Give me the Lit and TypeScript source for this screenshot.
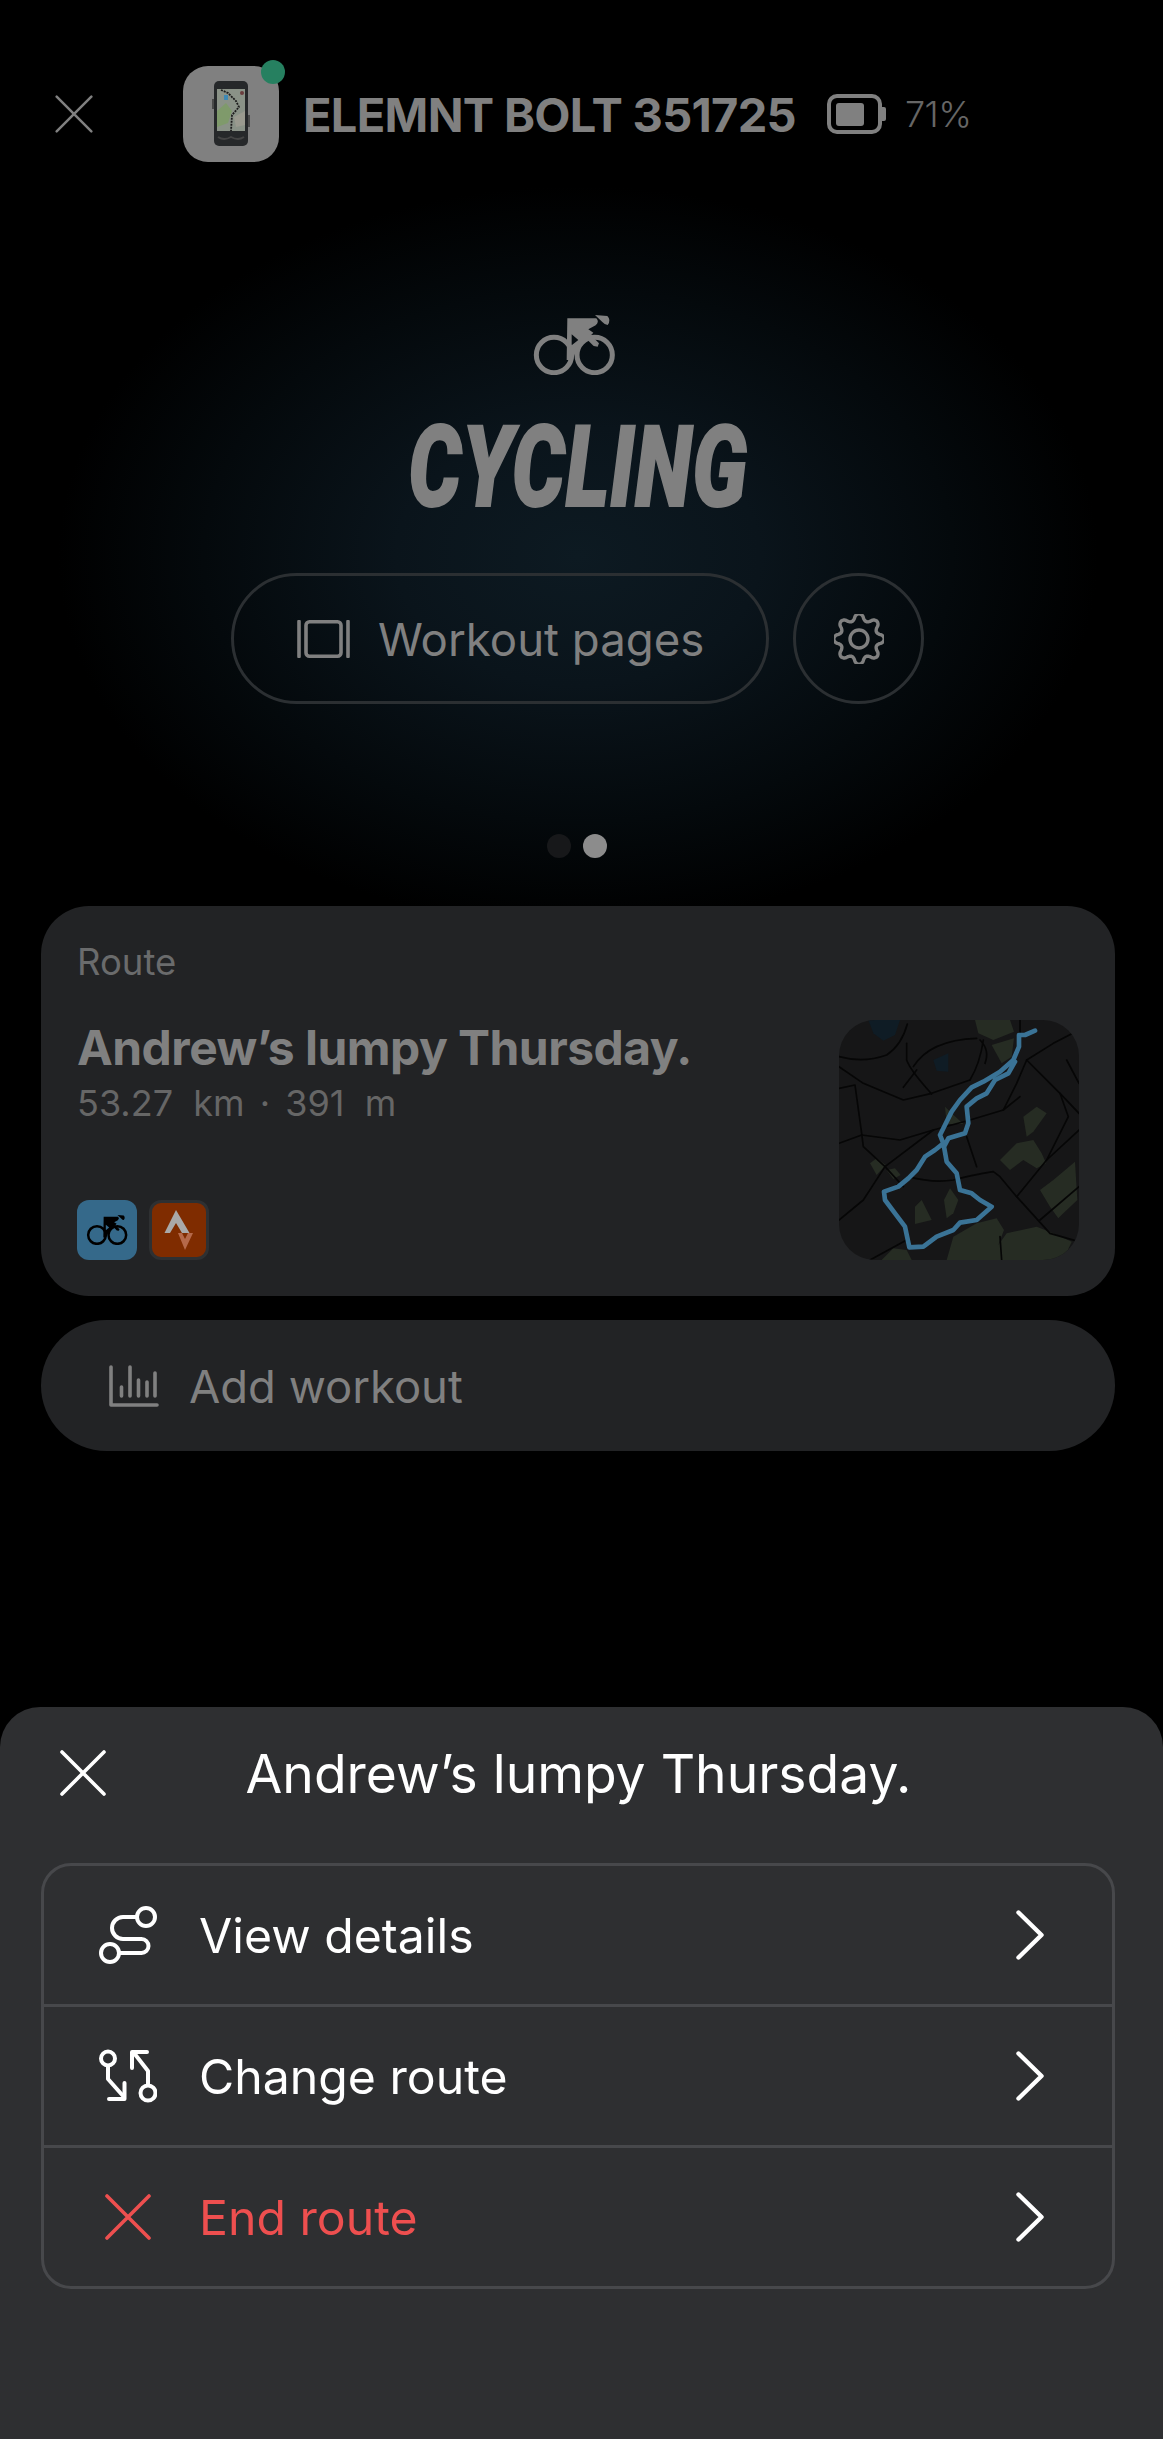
import { LitElement, html, css, svg } from "lit";
import { customElement } from "lit/decorators.js";

function gearPath(): string {
  const pts: string[] = [];
  const n = 192;
  for (let i = 0; i < n; i++) {
    const t = (i / n) * Math.PI * 2;
    const w = Math.cos(8 * t);
    const r = 22 + 3.2 * Math.sign(w) * Math.pow(Math.abs(w), 0.7);
    const x = 25 + r * Math.sin(t);
    const y = 25 - r * Math.cos(t);
    pts.push(`${i ? "L" : "M"}${x.toFixed(2)} ${y.toFixed(2)}`);
  }
  return pts.join(" ") + "Z";
}

const bike = (w: number, h: number, color: string) => html`
  <svg class="glyph" width=${w} height=${h} viewBox="100 75 250 180">
    <circle cx="165" cy="195" r="53" fill="none" stroke=${color} stroke-width="15"></circle>
    <circle cx="287" cy="195" r="53" fill="none" stroke=${color} stroke-width="15"></circle>
    <path fill=${color} fill-rule="evenodd" d="M205 85 L292 85 Q302 95 290 106 L268 118 L283 128 L262 150 L236 175 L219 210 L203 210 Z M218 133 L218 166 L238 150 Z"></path>
    <path fill=${color} d="M288 75 L325 78 Q337 90 326 105 Q318 105 310 96 Z"></path>
    <path fill=${color} d="M262 146 L276 136 L300 160 L296 170 L284 168 Z"></path>
  </svg>`;

const x = (size: number, color: string, sw: number) => html`
  <svg class="glyph" width=${size} height=${size} viewBox="0 0 46 46">
    <path d="M2 2 L44 44 M44 2 L2 44" fill="none" stroke=${color} stroke-width=${sw} stroke-linecap="round"></path>
  </svg>`;

const chevron = html`
  <svg class="glyph" width="28" height="50" viewBox="0 0 28 50">
    <path d="M2.5 2.5 L25.5 25 L2.5 47.5" fill="none" stroke="#fff" stroke-width="4.4" stroke-linecap="round" stroke-linejoin="round"></path>
  </svg>`;

const mapArt = svg`
  <rect x="57" y="60" width="720" height="720" fill="#161617"></rect>
  <g fill="#0f1c25">
    <path d="M145 60 L240 60 L225 105 L190 122 L160 100Z"></path>
    <path d="M340 180 L385 160 L385 215 L350 212Z"></path>
  </g>
  <g fill="#262c23">
    <path d="M465 60 L570 60 L582 95 L520 120 L475 100Z"></path>
    <path d="M515 135 L582 115 L575 170 L545 190Z"></path>
    <path d="M610 350 L650 320 L680 340 L640 395 L620 410Z"></path>
    <path d="M540 480 L590 430 L640 420 L665 460 L678 490 L650 505 L610 480 L570 510Z"></path>
    <path d="M660 570 L700 540 L765 485 L772 600 L730 640 L715 655 L690 620Z"></path>
    <path d="M380 780 L400 710 L470 670 L530 655 L552 690 L535 735 L560 700 L650 680 L700 700 L755 725 L730 780Z"></path>
    <path d="M185 780 L220 745 L260 750 L275 780Z"></path>
    <path d="M150 490 L170 475 L197 495 L170 525Z"></path>
    <path d="M200 510 L225 505 L242 525 L220 537Z"></path>
    <path d="M285 620 L305 600 L335 660 L285 672Z"></path>
    <path d="M372 600 L390 565 L415 600 L400 640 L380 655Z"></path>
    <path d="M375 320 L395 340 L430 372 L380 372Z"></path>
  </g>
  <g fill="none" stroke="#060606" stroke-width="5" stroke-linejoin="round" stroke-linecap="round">
    <path d="M57 170 Q130 190 200 165 Q245 135 262 72"></path>
    <path d="M260 130 V180 Q270 210 335 282"></path>
    <path d="M57 200 L130 250 L250 300 L335 280 L450 240"></path>
    <path d="M290 210 L250 262"></path>
    <path d="M57 265 L105 255 L125 400 L130 440 L195 500 L250 560"></path>
    <path d="M57 430 L125 405 L240 420 L340 390 L450 360 L550 330 L590 250 L620 180 L700 130 L777 90"></path>
    <path d="M57 660 L130 600 L195 500 L340 390"></path>
    <path d="M265 530 Q340 550 400 540 Q480 520 520 515 L540 530 L590 590 L690 700 L777 725"></path>
    <path d="M620 180 L720 280 L777 340"></path>
    <path d="M440 410 L470 500"></path>
    <path d="M590 590 L680 480 L777 390"></path>
    <path d="M550 330 L600 290"></path>
    <path d="M720 280 L745 350 L680 480"></path>
    <path d="M540 710 L545 780"></path>
    <path d="M660 660 L777 560"></path>
    <path d="M150 780 L260 720"></path>
    <path d="M480 120 Q510 150 495 190"></path>
    <path d="M280 200 Q330 120 470 115"></path>
    <path d="M450 240 Q480 190 490 120"></path>
    <path d="M600 60 V100"></path>
    <path d="M740 180 L777 250"></path>
  </g>
  <path fill="none" stroke="#3a7396" stroke-width="14" stroke-linejoin="round" stroke-linecap="round"
    d="M645 92 L615 105 L597 105 L597 140 L580 180 L540 215 L490 245 L455 262 L420 300 L395 335 L375 375 L360 405 L370 430 L345 450 L315 470 L290 510 L265 535 L235 560 L192 575 L195 600 L225 640 L255 680 L268 742 L310 740 L350 710 L400 690 L420 668 L470 660 L515 620 L480 600 L455 580 L420 570 L410 520 L380 485 L372 440 L385 415 L435 400 L445 370 L440 320 L470 295 L500 280 L525 240 L565 220 L585 185"></path>
`;

@customElement("app-root")
export class AppRoot extends LitElement {
  static styles = css`
    :host {
      display: block;
      width: 1163px;
      height: 2439px;
      background: #000;
      font-family: Inter, "Liberation Sans", sans-serif;
      overflow: hidden;
    }
    .glyph { display: block; }
    .page {
      display: flex;
      flex-direction: column;
      height: 2439px;
    }
    .header {
      display: flex;
      align-items: center;
      height: 96px;
      padding: 66px 0 0 55px;
    }
    .header-x { display: block; margin-right: 90px; }
    .device {
      position: relative;
      width: 96px;
      height: 96px;
      border-radius: 25px;
      background: #808080;
      margin-right: 24px;
      display: flex;
      align-items: center;
      justify-content: center;
    }
    .dot {
      position: absolute;
      top: -6px;
      right: -6px;
      width: 24px;
      height: 24px;
      border-radius: 50%;
      background: #268060;
    }
    .device-name {
      font-size: 47px;
      font-weight: 700;
      color: #808080;
      letter-spacing: -0.7px;
      white-space: nowrap;
      margin-right: 31px;
    }
    .battery { display: block; margin-right: 19px; }
    .pct {
      font-size: 36px;
      font-weight: 300;
      color: #666;
      letter-spacing: -0.5px;
    }
    .hero {
      display: flex;
      flex-direction: column;
      align-items: center;
      height: 744px;
      background: radial-gradient(ellipse 520px 370px at 578px 394px, #0d1a22 0%, #0a141b 35%, #04090c 72%, #000 100%);
    }
    .hero-bike { margin-top: 153px; margin-left: -16px; }
    .sport {
      height: 86px;
      margin-top: 50px;
      margin-left: -6px;
      line-height: 86px;
      font-family: Roboto, sans-serif;
      font-style: italic;
      font-weight: 900;
      font-size: 112px;
      color: #808080;
      -webkit-text-stroke: 2px #808080;
      transform: scaleX(0.74);
      white-space: nowrap;
      letter-spacing: 1px;
    }
    .actions {
      display: flex;
      gap: 24px;
      margin-top: 62px;
      margin-left: -8px;
    }
    .btn {
      box-sizing: border-box;
      height: 131px;
      border: 3px solid #2b2f32;
      border-radius: 66px;
      display: flex;
      align-items: center;
    }
    .btn.wide {
      width: 538px;
      gap: 27px;
      padding-left: 63px;
      font-size: 45.6px;
      color: #808080;
      font-weight: 400;
    }
    .btn.wide span { padding: 2px 0 0 1px; }
    .btn.round { width: 131px; justify-content: center; }
    .dots {
      display: flex;
      gap: 12px;
      margin-top: 130px;
      margin-left: -10px;
    }
    .dots span {
      width: 24px;
      height: 24px;
      border-radius: 50%;
      background: #17181a;
    }
    .dots span.on { background: #8c8c8c; }
    .stack {
      display: flex;
      flex-direction: column;
      gap: 24px;
      padding: 0 48px 0 41px;
    }
    .card {
      box-sizing: border-box;
      height: 390px;
      border-radius: 48px;
      background: #222325;
      display: flex;
      justify-content: space-between;
      padding: 0 36px 0 36px;
    }
    .info {
      display: flex;
      flex-direction: column;
    }
    .label {
      font-size: 36.5px;
      line-height: 42px;
      margin-top: 35px;
      color: #6a6b6c;
    }
    .route-name {
      font-size: 48px;
      font-weight: 700;
      line-height: 56px;
      margin-top: 37px;
      color: #808080;
      letter-spacing: -0.55px;
    }
    .meta {
      font-size: 36px;
      line-height: 42px;
      margin-top: 6px;
      color: #666;
      white-space: pre;
    }
    .sep { margin: 0 5px; }
    .badges {
      display: flex;
      gap: 12px;
      margin-top: auto;
      margin-bottom: 36px;
    }
    .badge {
      box-sizing: border-box;
      width: 60px;
      height: 60px;
      border-radius: 12px;
      display: flex;
      align-items: center;
      justify-content: center;
    }
    .badge.blue { background: #35698a; }
    .badge.strava { background: #7f2c00; border: 3px solid #2e3032; }
    .map {
      display: block;
      width: 240px;
      height: 240px;
      margin-top: 114px;
      border-radius: 36px;
      overflow: hidden;
    }
    .add {
      box-sizing: border-box;
      height: 131px;
      border-radius: 66px;
      background: #222325;
      display: flex;
      align-items: center;
      gap: 30px;
      padding-left: 68px;
      font-size: 45.4px;
      color: #808080;
    }
    .add span { padding-top: 2px; }
    .sheet {
      box-sizing: border-box;
      height: 732px;
      margin-top: auto;
      background: #2e2f31;
      border-radius: 40px 40px 0 0;
    }
    .sheet-head {
      display: grid;
      grid-template-columns: 1fr auto 1fr;
      align-items: center;
      height: 132px;
      margin-bottom: 24px;
      padding-left: 60px;
      padding-right: 66px;
      color: #fff;
      font-size: 53.4px;
    }
    .list {
      box-sizing: border-box;
      margin: 0 48px 0 41px;
      border: 3px solid #47484b;
      border-radius: 30px;
    }
    .row {
      display: flex;
      align-items: center;
      height: 138px;
      padding: 0 68px 0 55px;
      font-size: 48.2px;
      color: #fff;
    }
    .row + .row { border-top: 3px solid #47484b; }
    .row.danger { color: #ee4f4f; }
    .row-icon {
      width: 58px;
      margin-right: 42px;
      display: flex;
      align-items: center;
      justify-content: center;
    }
    .row-label { flex: 1; }
  `;

  render() {
    const gray = "#808080";
    return html`
      <div class="page">
        <div class="header">
          <div class="header-x">${x(38, gray, 3)}</div>
          <div class="device">
            <svg class="glyph" width="38" height="66" viewBox="0 0 38 66">
              <rect x="2" y="0" width="34" height="65" rx="5" fill="#26282a"></rect>
              <rect x="0" y="18" width="2" height="10" fill="#4a4a4a"></rect>
              <rect x="36" y="34" width="2" height="12" fill="#4a4a4a"></rect>
              <rect x="5" y="8" width="28" height="42" fill="#8a9287"></rect>
              <path d="M5 30 L14 22 L20 30 L16 42 L5 46Z" fill="#7f9a6b"></path>
              <path d="M22 36 L33 30 V44 L24 46Z" fill="#9a9a8f"></path>
              <rect x="12" y="14" width="4" height="5" fill="#3d89b5"></rect>
              <path d="M9 9 L16 12 L24 20 L27 26 L20 34 L19 50" fill="none" stroke="#1c1c1c" stroke-width="1.8" stroke-dasharray="2 1"></path>
              <circle cx="30" cy="12" r="2" fill="#6a3d3d"></circle>
              <path d="M6 56 Q12 60 19 56 Q26 60 32 56" fill="none" stroke="#444" stroke-width="2"></path>
            </svg>
            <span class="dot"></span>
          </div>
          <div class="device-name">ELEMNT BOLT 351725</div>
          <svg class="battery" width="59" height="40" viewBox="0 0 59 40">
            <rect x="2" y="2" width="51" height="36" rx="8" fill="none" stroke=${gray} stroke-width="4"></rect>
            <rect x="9" y="9" width="28" height="23" rx="3" fill=${gray}></rect>
            <path d="M55 13 H57 Q59 13 59 15 V25 Q59 27 57 27 H55 Z" fill=${gray}></path>
          </svg>
          <span class="pct">71%</span>
        </div>

        <div class="hero">
          <div class="hero-bike">${bike(84, 60, gray)}</div>
          <div class="sport">CYCLING</div>
          <div class="actions">
            <div class="btn wide">
              <svg class="glyph" width="53" height="38" viewBox="0 0 53 38">
                <path d="M2 1.5 V36.5 M51 1.5 V36.5" stroke=${gray} stroke-width="3.6" stroke-linecap="round" fill="none"></path>
                <rect x="9" y="1.8" width="35" height="34.4" rx="3.5" fill="none" stroke=${gray} stroke-width="3.6"></rect>
              </svg>
              <span>Workout pages</span>
            </div>
            <div class="btn round">
              <svg class="glyph" width="50" height="50" viewBox="0 0 50 50">
                <path d=${gearPath()} fill="none" stroke=${gray} stroke-width="3.4" stroke-linejoin="round"></path>
                <circle cx="25" cy="25" r="9" fill="none" stroke=${gray} stroke-width="3.4"></circle>
              </svg>
            </div>
          </div>
          <div class="dots"><span></span><span class="on"></span></div>
        </div>

        <div class="stack">
          <div class="card">
            <div class="info">
              <div class="label">Route</div>
              <div class="route-name">Andrew’s lumpy Thursday.</div>
              <div class="meta">53.27  km<span class="sep"> · </span>391  m</div>
              <div class="badges">
                <div class="badge blue">${bike(42, 30, "#000")}</div>
                <div class="badge strava">
                  <svg class="glyph" width="54" height="54" viewBox="3 3 54 54">
                    <path d="M27 10 L40.5 33 H33 L27 23 L21 33 H15.5 Z" fill="#a9a9a9"></path>
                    <path d="M29 33 H33 L36 39 L39 33 H44 L36 50 Z" fill="#b5694a"></path>
                  </svg>
                </div>
              </div>
            </div>
            <svg class="map" viewBox="57 60 720 720">${mapArt}</svg>
          </div>
          <div class="add">
            <svg class="glyph" width="50" height="42" viewBox="0 0 50 42">
              <path d="M2 2 V40 H48 M12.5 22 V31 M21 2 V31 M29.5 15 V31 M38 17 V31 M46 8 V31" fill="none" stroke=${gray} stroke-width="3.6" stroke-linecap="round" stroke-linejoin="round"></path>
            </svg>
            <span>Add workout</span>
          </div>
        </div>

        <div class="sheet">
          <div class="sheet-head">
            <div>${x(46, "#fff", 3.6)}</div>
            <div>Andrew’s lumpy Thursday.</div>
            <div></div>
          </div>
          <div class="list">
            <div class="row">
              <div class="row-icon">
                <svg class="glyph" width="58" height="58" viewBox="0 0 58 58">
                  <g fill="none" stroke="#fff" stroke-width="4" stroke-linecap="round">
                    <circle cx="47" cy="11" r="9"></circle>
                    <circle cx="11" cy="47" r="9"></circle>
                    <path d="M38 11 H24 A11 11 0 0 0 24 33 H42.5 A7 7 0 0 1 42.5 47 H20"></path>
                  </g>
                </svg>
              </div>
              <div class="row-label">View details</div>
              ${chevron}
            </div>
            <div class="row">
              <div class="row-icon">
                <svg class="glyph" width="58" height="54" viewBox="0 0 58 54">
                  <g fill="none" stroke="#fff" stroke-width="4" stroke-linecap="round" stroke-linejoin="round">
                    <circle cx="9" cy="9.5" r="7"></circle>
                    <path d="M9 17 V30 L25 48"></path>
                    <path d="M10 50 H25.5 V34"></path>
                    <circle cx="49" cy="44" r="7.5"></circle>
                    <path d="M49 36 V22 L35 4"></path>
                    <path d="M48 3 H33 V19"></path>
                  </g>
                </svg>
              </div>
              <div class="row-label">Change route</div>
              ${chevron}
            </div>
            <div class="row danger">
              <div class="row-icon">${x(46, "#ee4f4f", 3.6)}</div>
              <div class="row-label">End route</div>
              ${chevron}
            </div>
          </div>
        </div>
      </div>
    `;
  }
}
